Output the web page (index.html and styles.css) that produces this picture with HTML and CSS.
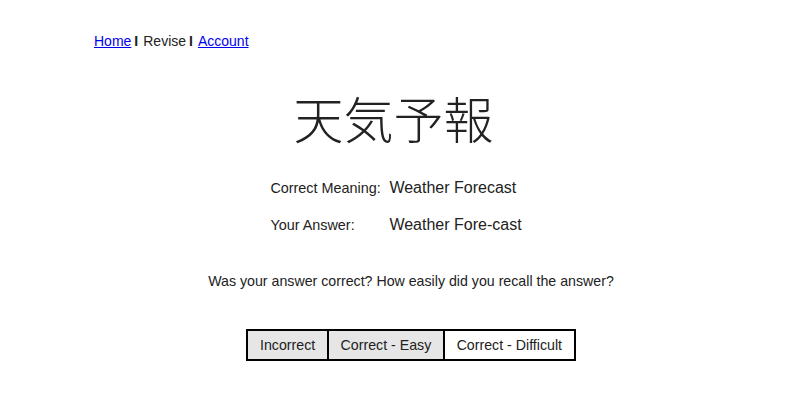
FILE: index.html
```html
<!DOCTYPE html>
<html>
<head>
<meta charset="utf-8">
<link rel="stylesheet" href="styles.css">
</head>
<body>
<nav class="nav"><a href="#">Home</a><span class="sep">I</span>Revise<span class="sep">I</span><a href="#">Account</a></nav>
<main class="main">
  <h1 class="kanji">天気予報</h1>
  <div class="info">
    <div class="row"><span class="label">Correct Meaning:</span><span class="value">Weather Forecast</span></div>
    <div class="row"><span class="label">Your Answer:</span><span class="value">Weather Fore-cast</span></div>
  </div>
  <p class="question">Was your answer correct? How easily did you recall the answer?</p>
  <div class="buttons">
    <button class="btn grey">Incorrect</button>
    <button class="btn grey">Correct - Easy</button>
    <button class="btn">Correct - Difficult</button>
  </div>
</main>
</body>
</html>
```
FILE: styles.css
```css
html, body { margin: 0; padding: 0; background: #fff; }
body { font-family: "Liberation Sans", Arial, sans-serif; color: #222; width: 807px; }
.nav { padding: 33px 0 0 94px; font-size: 14px; line-height: 16px; }
.nav a { color: #0000ee; text-decoration: underline; }
.sep { font-weight: bold; margin: 0 5px 0 3px; }
.main { display: flex; flex-direction: column; align-items: center; padding-left: 15px; }
.kanji { margin: 38px 0 0 -35px; font-family: "Noto Sans CJK JP", sans-serif; font-weight: 300; font-size: 50px; line-height: 60px; }
.info { display: flex; flex-direction: column; gap: 19px; margin: 32px 0 0 -30px; }
.row { display: flex; align-items: baseline; }
.label { width: 119px; font-size: 14.4px; line-height: 18px; }
.value { font-size: 16px; line-height: 18px; }
.question { margin: 39px 0 0 0; font-size: 14.2px; line-height: 16px; }
.buttons { display: flex; margin-top: 40px; border: 2px solid #000; }
.btn { font-family: inherit; font-size: 14.2px; color: #222; background: #fff; border: 0; border-left: 2px solid #000; padding: 0 11.7px; height: 28px; margin: 0; }
.btn:first-child { border-left: 0; }
.btn.grey { background: #e6e6e6; }
```
